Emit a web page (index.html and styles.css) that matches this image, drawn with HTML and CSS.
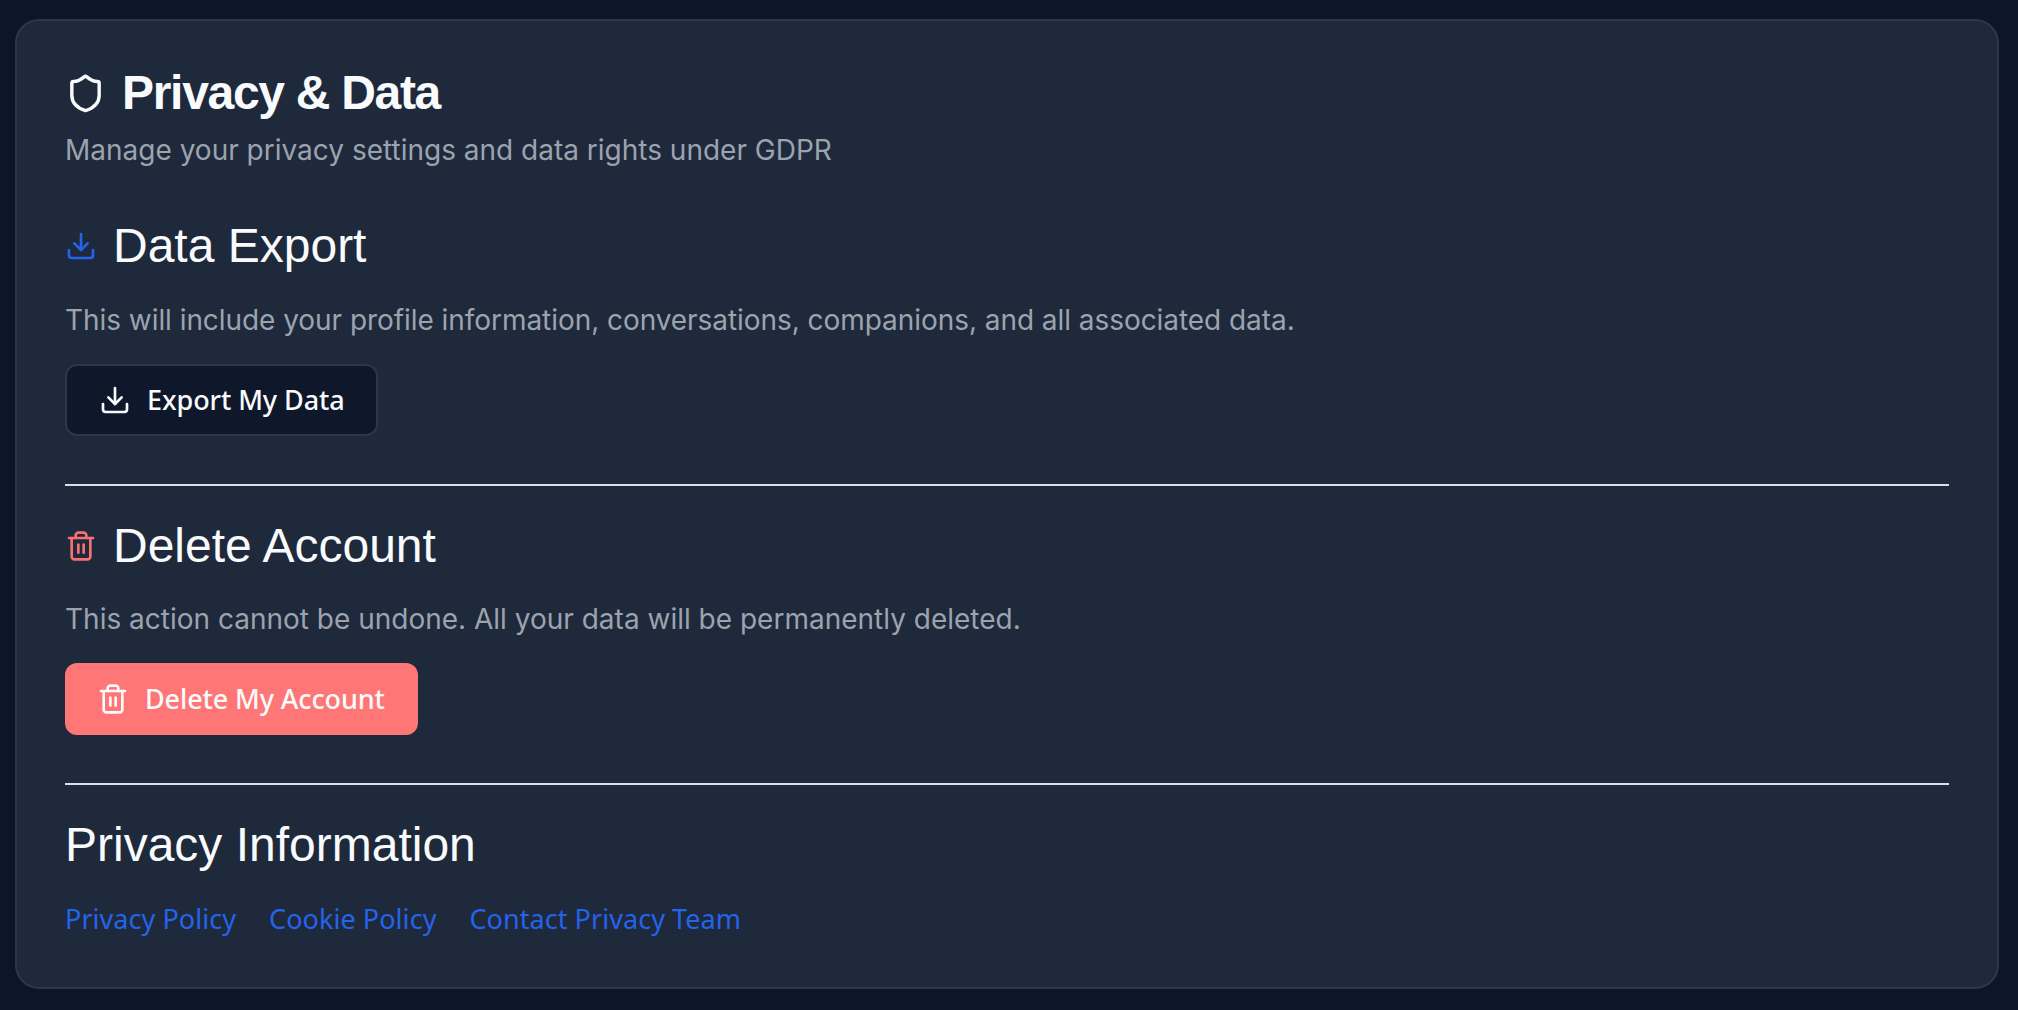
FILE: index.html
```html
<!DOCTYPE html>
<html lang="en">
<head>
<meta charset="utf-8">
<title>Privacy &amp; Data</title>
<link rel="stylesheet" href="styles.css">
</head>
<body>
<main class="card">
  <header class="card-header">
    <h1 class="title">
      <svg class="icon icon-shield" viewBox="0 0 24 24"><path d="M20 13c0 5-3.5 7.5-7.66 8.95a1 1 0 0 1-.67-.01C7.5 20.5 4 18 4 13V6a1 1 0 0 1 1-1c2 0 4.5-1.2 6.24-2.72a1.17 1.17 0 0 1 1.52 0C14.51 3.81 17 5 19 5a1 1 0 0 1 1 1z"/></svg>
      Privacy &amp; Data
    </h1>
    <p class="desc">Manage your privacy settings and data rights under GDPR</p>
  </header>
  <section class="section section-first">
    <h2 class="heading">
      <svg class="icon icon-blue" viewBox="0 0 24 24"><path d="M21 15v4a2 2 0 0 1-2 2H5a2 2 0 0 1-2-2v-4"/><path d="M7 10l5 5 5-5"/><path d="M12 15V3"/></svg>
      Data Export
    </h2>
    <p class="desc desc-long">This will include your profile information, conversations, companions, and all associated data.</p>
    <button class="btn btn-dark" type="button">
      <svg class="icon" viewBox="0 0 24 24"><path d="M21 15v4a2 2 0 0 1-2 2H5a2 2 0 0 1-2-2v-4"/><path d="M7 10l5 5 5-5"/><path d="M12 15V3"/></svg>
      Export My Data
    </button>
  </section>
  <hr class="rule">
  <section class="section">
    <h2 class="heading">
      <svg class="icon icon-red" viewBox="0 0 24 24"><path d="M3 6h18"/><path d="M19 6v14c0 1-1 2-2 2H7c-1 0-2-1-2-2V6"/><path d="M8 6V4c0-1 1-2 2-2h4c1 0 2 1 2 2v2"/><path d="M10 11v6"/><path d="M14 11v6"/></svg>
      Delete Account
    </h2>
    <p class="desc">This action cannot be undone. All your data will be permanently deleted.</p>
    <button class="btn btn-danger" type="button">
      <svg class="icon" viewBox="0 0 24 24"><path d="M3 6h18"/><path d="M19 6v14c0 1-1 2-2 2H7c-1 0-2-1-2-2V6"/><path d="M8 6V4c0-1 1-2 2-2h4c1 0 2 1 2 2v2"/><path d="M10 11v6"/><path d="M14 11v6"/></svg>
      Delete My Account
    </button>
  </section>
  <hr class="rule">
  <section class="section">
    <h2 class="heading">Privacy Information</h2>
    <nav class="links">
      <a class="link" href="#">Privacy Policy</a>
      <a class="link" href="#">Cookie Policy</a>
      <a class="link" href="#">Contact Privacy Team</a>
    </nav>
  </section>
</main>
</body>
</html>
```
FILE: styles.css
```css
* { box-sizing: border-box; }
html, body { margin: 0; height: 100%; }
body {
  background: #0d1528;
  padding: 19px 19px 21px 15px;
  overflow: hidden;
}
.card {
  height: 970px;
  background: #1e293b;
  border: 2px solid #2b384b;
  border-radius: 24px;
  padding: 43px 48px 0;
  display: flex;
  flex-direction: column;
}
.icon {
  fill: none;
  stroke: currentColor;
  stroke-width: 2;
  stroke-linecap: round;
  stroke-linejoin: round;
  width: 32px;
  height: 32px;
  flex: none;
}
.icon-shield { width: 41px; height: 41px; }
.icon-blue { color: #2563eb; }
.icon-red { color: #f87171; }
.title {
  margin: 0;
  display: flex;
  align-items: center;
  gap: 16px;
  font: 700 48px/58px "Liberation Sans", Arial, sans-serif;
  letter-spacing: -1.3px;
  color: #f8fafc;
}
.desc {
  margin: 11px 0 0;
  font: 400 28px/34px Inter, sans-serif;
  color: #9ca3af;
}
.section { display: flex; flex-direction: column; align-items: flex-start; margin-top: 31px; }
.section-first { margin-top: 50px; }
.heading {
  margin: 0;
  display: flex;
  align-items: center;
  gap: 16px;
  font: 400 48px/58px "Liberation Sans", Arial, sans-serif;
  color: #f8fafc;
}
.section .desc { margin-top: 27px; }
.section .desc-long { margin-top: 28px; letter-spacing: -0.055px; }
.btn {
  margin-top: 27px;
  height: 72px;
  display: inline-flex;
  align-items: center;
  gap: 16px;
  padding: 0 31px 0 32px;
  border-radius: 12px;
  font: 500 27px/34px "Noto Sans", sans-serif;
  letter-spacing: -0.08px;
  color: #f8fafc;
  border: 2px solid transparent;
}
.btn-dark { background: #0f172a; border-color: #2b384b; }
.btn-danger { background: #ff7676; border-color: #ff7676; padding-left: 30px; letter-spacing: -0.12px; }
.rule {
  width: 100%;
  height: 2px;
  margin: 48px 0 0;
  border: 0;
  background: #d9dfe8;
}
.links { display: flex; gap: 33px; margin-top: 28px; }
.link {
  font: 400 27px/34px "Noto Sans", sans-serif;
  letter-spacing: 0.05px;
  color: #2563eb;
  text-decoration: none;
}
```
